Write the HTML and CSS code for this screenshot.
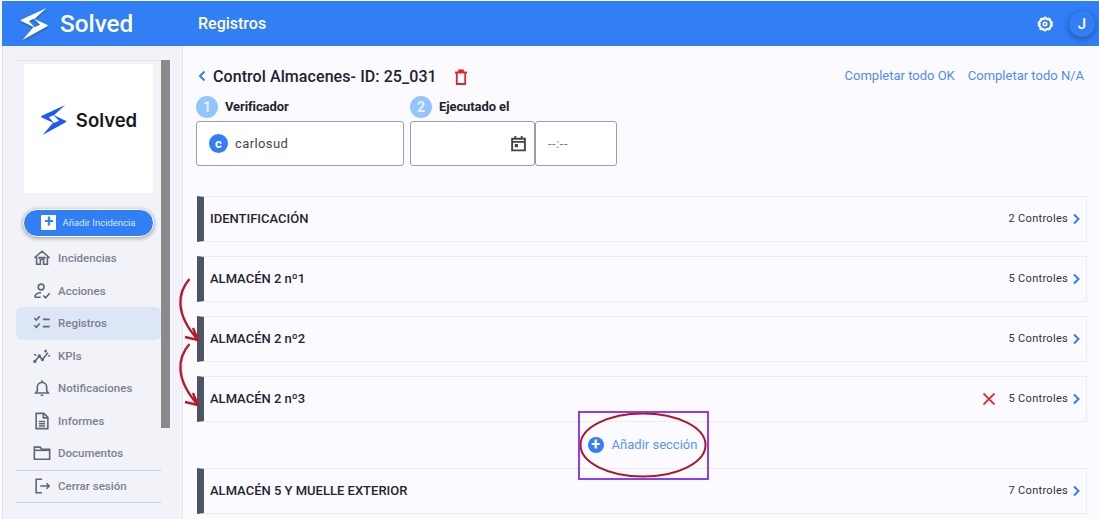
FILE: index.html
```html
<!DOCTYPE html>
<html lang="es">
<head>
<meta charset="utf-8">
<title>Registros</title>
<link rel="stylesheet" href="styles.css">
</head>
<body>
<div class="app">
  <header class="topbar">
    <div class="brand">
      <svg class="brand-mark" viewBox="8 4 27 32"><path fill-rule="evenodd" fill="#fff" d="M34 4 9 15.500c-1 .6-1 1.200 0 1.700L21 23 10 36l24.500-13.500c1-.6 1-1.200 0-1.700L22 15ZM16.500 17l5-2.200 6 6-5.500 2.500Z"/></svg>
      <span class="brand-name">Solved</span>
    </div>
    <div class="page-name">Registros</div>
    <svg class="gear" viewBox="0 0 24 24" fill="none" stroke="#fff" stroke-width="3.400" stroke-linejoin="round"><path d="M12 2.500l3 2 3.600-.2 1.400 3.200 2.400 2.500-1.400 2 1.400 2-2.400 2.500-1.400 3.200-3.600-.2-3 2-3-2-3.600.2L5 16.500 2.600 14 4 12l-1.400-2L5 7.500l1.400-3.200 3.600.2Z"/><circle cx="12" cy="12" r="2.600" stroke-width="2.400"/></svg>
    <div class="avatar">J</div>
  </header>
  <div class="body">
    <aside class="sidebar">
      <div class="side-col">
        <div class="logo-card">
          <svg class="logo-mark" viewBox="8 4 27 32"><path fill-rule="evenodd" fill="#1d5cf0" d="M34 4 9 15.500c-1 .6-1 1.200 0 1.700L21 23 10 36l24.500-13.500c1-.6 1-1.200 0-1.700L22 15ZM16.500 17l5-2.200 6 6-5.500 2.500Z"/></svg>
          <span class="logo-name">Solved</span>
        </div>
        <button class="add-btn"><span class="add-plus">+</span>Añadir Incidencia</button>
        <nav class="nav">
          <a class="nav-item"><svg class="nav-ico" viewBox="0 0 20 20"><path d="M1.500 10 10 2.500l8.500 7.500M4 8.500V17h4.200v-5.500h3.600V17H16V8.500M7 11V9.500h6V11"/></svg>Incidencias</a>
          <a class="nav-item"><svg class="nav-ico" viewBox="0 0 20 20"><circle cx="9" cy="5.500" r="3.200"/><path d="M2 17c0-3.500 3-5.200 7-5M11.500 15l2.500 2.500 4.500-5M2 17h6.500"/></svg>Acciones</a>
          <a class="nav-item active"><svg class="nav-ico" viewBox="0 0 20 20"><path d="M1.500 4.500l2.200 2.200L7.500 2.500M1.500 12.500l2.200 2.200 3.800-4.200M11 6h7.500M11 14h7.500"/></svg>Registros</a>
          <a class="nav-item"><svg class="nav-ico kpi" viewBox="0 0 20 20"><path d="M2 16l5-6 3.500 4 6-7.500"/><path d="M1.500 8l2 1.500M14 3v3M12.500 4.500h3M17 9.500l2 .5"/><circle cx="2" cy="16" r="1"/><circle cx="7" cy="10" r="1"/><circle cx="10.500" cy="14" r="1"/></svg>KPIs</a>
          <a class="nav-item"><svg class="nav-ico" viewBox="0 0 20 20"><path d="M3 15.500h14l-1.800-2.500V9a5.200 5.200 0 0 0-10.400 0v4ZM10 1.500v2M8.500 18h3"/></svg>Notificaciones</a>
          <a class="nav-item"><svg class="nav-ico" viewBox="0 0 20 20"><path d="M3.500 1.500h8.500l4.500 4.500v12.500h-13ZM11.500 1.500V6.500h5M6.500 10.500h7M6.500 13h7M6.500 15.500h7"/></svg>Informes</a>
          <a class="nav-item"><svg class="nav-ico" viewBox="0 0 20 20"><path d="M1.500 3.500h6.500l2 2.500h8.500v11h-17Z"/><path d="M1.500 7h17"/></svg>Documentos</a>
          <a class="nav-item logout"><svg class="nav-ico" viewBox="0 0 20 20"><path d="M10 2.500H3.500v15H10M8 10h10M15 7l3 3-3 3"/></svg>Cerrar sesión</a>
        </nav>
      </div>
      <div class="scroll-track"><div class="scroll-thumb"></div></div>
    </aside>
    <main class="main">
      <div class="title-row">
        <svg class="back" viewBox="0 0 10 14"><path d="M7.500 2.500 3 7l4.500 4.500"/></svg>
        <h1 class="title">Control Almacenes- ID: 25_031</h1>
        <svg class="trash" viewBox="0 0 14 16"><path d="M1 3.500h12M5 3V1.500h4V3M2.800 3.500V15h8.400V3.500"/></svg>
        <div class="links"><a>Completar todo OK</a><a>Completar todo N/A</a></div>
      </div>
      <div class="fields">
        <div class="field">
          <div class="field-label"><span class="step">1</span>Verificador</div>
          <div class="box box-user"><span class="chip">c</span>carlosud</div>
        </div>
        <div class="field">
          <div class="field-label"><span class="step">2</span>Ejecutado el</div>
          <div class="dates">
            <div class="box box-date"><svg class="cal" viewBox="0 0 16 16"><path d="M2 3.500h12V14.500H2ZM2 6.500h12M5 1v3M11 1v3"/><rect x="4.500" y="8.500" width="3" height="3" fill="#444" stroke="none"/></svg></div>
            <div class="box box-time">--:--</div>
          </div>
        </div>
      </div>
      <section class="sections">
        <div class="row"><span class="row-name">IDENTIFICACIÓN</span><span class="count">2 Controles</span><svg class="chev" viewBox="0 0 8 12"><path d="M2 1.500 6.500 6 2 10.500"/></svg></div>
        <div class="row"><span class="row-name">ALMACÉN 2 nº1</span><span class="count">5 Controles</span><svg class="chev" viewBox="0 0 8 12"><path d="M2 1.500 6.500 6 2 10.500"/></svg></div>
        <div class="row"><span class="row-name">ALMACÉN 2 nº2</span><span class="count">5 Controles</span><svg class="chev" viewBox="0 0 8 12"><path d="M2 1.500 6.500 6 2 10.500"/></svg></div>
        <div class="row"><span class="row-name">ALMACÉN 2 nº3</span><svg class="del" viewBox="0 0 12 12"><path d="M.5.5l11 11M11.500.5l-11 11"/></svg><span class="count">5 Controles</span><svg class="chev" viewBox="0 0 8 12"><path d="M2 1.500 6.500 6 2 10.500"/></svg></div>
        <div class="add-section"><span class="add-circle">+</span><span class="add-label">Añadir sección</span></div>
        <div class="row"><span class="row-name">ALMACÉN 5 Y MUELLE EXTERIOR</span><span class="count">7 Controles</span><svg class="chev" viewBox="0 0 8 12"><path d="M2 1.500 6.500 6 2 10.500"/></svg></div>
      </section>
    </main>
  </div>
  <svg class="annotations" viewBox="0 0 1099 519">
    <path class="red" d="M189.500 279C178 292 174 313 198 340M185 337l13 3-5-12M189.500 344C178 357 174 378 198 405M185 402l13 3-5-12"/>
    <ellipse class="oval" cx="643" cy="445" rx="62.500" ry="31.500"/>
    <rect class="purple" x="579" y="412" width="129" height="67"/>
  </svg>
</div>
</body>
</html>
```

FILE: styles.css
```css
* { box-sizing: border-box; }
html, body { margin: 0; padding: 0; height: 100%; overflow: hidden; }
body { font-family: Roboto, "Liberation Sans", sans-serif; background: #fbfbff; color: #1f2937; }
.app { position: relative; width: 1099px; height: 519px; overflow: hidden; }

.topbar { height: 46px; margin: 1px 0 -1px 2px; background: #317ef5; color: #fff; display: flex; align-items: center; border-bottom: 1px solid #8db6f8; }
.brand { width: 196px; display: flex; align-items: center; padding-left: 18px; }
.brand-mark { width: 28px; height: 32px; filter: drop-shadow(0 1px 1px rgba(0,0,0,.35)); }
.brand-name { font-size: 24.300px; font-weight: 500; margin-left: 12px; }
.page-name { font-size: 16px; font-weight: 500; flex: 1; }
.gear { width: 16px; height: 16px; margin-right: 16px; }
.avatar { width: 26px; height: 26px; border-radius: 50%; background: #317ef5; box-shadow: 0 2px 6px rgba(0,0,0,.35); display: flex; align-items: center; justify-content: center; font-size: 15px; font-weight: 500; margin-right: 4px; }

.body { display: flex; height: 473px; }
.sidebar { width: 181px; background: #f1f3f8; margin-left: 2px; padding: 14px 0 0 13px; border-right: 1px solid #e5e7ee; display: flex; border-left: 1px solid #dfe2ea; flex: none; }
.side-col { width: 145px; border-top: 1px solid #e3e5ec; padding-top: 3px; }
.scroll-track { width: 9px; height: 380px; background: #f2f3f4; }
.scroll-thumb { height: 368px; background: #8a8a8a; }

.logo-card { margin: 0 8px; height: 129px; width: 129px; background: #fff; display: flex; align-items: center; justify-content: center; gap: 9px; padding-bottom: 18px; }
.logo-mark { width: 27px; height: 30px; }
.logo-name { font-size: 18.500px; font-weight: 600; color: #16181d; font-family: Inter, Roboto, sans-serif; }
.add-btn { display: flex; align-items: center; justify-content: center; gap: 6px; width: 131px; height: 28px; margin: 16px 0 0 7px; border: 1.500px solid #fff; border-radius: 14px; background: #317ef5; color: #dbe8fd; font: 400 9.500px Roboto, sans-serif; box-shadow: 0 1px 4px rgba(0,0,0,.4); padding: 0 0 1px; }
.add-plus { width: 15px; height: 15px; background: #fff; color: #317ef5; border-radius: 1px; font-size: 16px; font-weight: 700; line-height: 14px; text-align: center; }
.nav { margin-top: 5px; display: flex; flex-direction: column; }
.nav-item { height: 32.500px; display: flex; align-items: center; gap: 7px; padding-left: 17px; font-size: 11.500px; font-weight: 500; color: #7b8190; border-radius: 6px; }
.nav-ico { width: 18px; height: 18px; fill: none; stroke: #5f6675; stroke-width: 1.800; flex: none; }
.kpi circle { fill: #5f6675; }
.active { background: #dce6f6; }
.logout { height: 33px; border-top: 1px solid #ccd5e2; border-bottom: 1px solid #ccd5e2; border-radius: 0; }

.main { flex: 1; padding: 17px 12px 0 14px; background: #fbfbff; }
.title-row { display: flex; align-items: center; height: 26px; }
.back { width: 10px; height: 14px; fill: none; stroke: #317ef5; stroke-width: 2; margin-right: 6px; }
.title { font-size: 16px; font-weight: 500; margin: 0; color: #1b2230; letter-spacing: .08px; }
.trash { width: 14px; height: 16px; margin: 2px 0 0 17px; fill: none; stroke: #e0262b; stroke-width: 1.800; }
.links { margin: 0 3px 2px auto; display: flex; gap: 13px; font-size: 13px; color: #4f8bf2; }

.fields { display: flex; gap: 6px; margin: 6px 0 0 -1px; }
.field-label { display: flex; align-items: center; gap: 7px; height: 23px; font-size: 13px; font-weight: 700; color: #1f2430; letter-spacing: -.1px; }
.step { width: 22px; height: 22px; border-radius: 50%; background: #93c5fd; color: #e3f0ff; display: flex; align-items: center; justify-content: center; font-size: 14px; font-weight: 700; }
.dates { display: flex; }
.box { height: 45px; margin-top: 3px; background: #fff; border: 1px solid #9a9ea6; border-radius: 3px; display: flex; align-items: center; }
.box-user { width: 208px; padding-left: 12px; gap: 7px; font-size: 13px; letter-spacing: .4px; color: #3f4654; }
.chip { width: 19px; height: 19px; border-radius: 50%; background: #317ef5; color: #fff; display: flex; align-items: center; justify-content: center; font-size: 13px; font-weight: 700; }
.box-date { width: 125px; justify-content: flex-end; padding-right: 7px; }
.cal { width: 17px; height: 17px; fill: none; stroke: #444; stroke-width: 1.800; }
.box-time { width: 82px; padding-left: 12px; font-size: 13px; letter-spacing: .5px; color: #7b7f88; }

.sections { margin-top: 30px; display: flex; flex-direction: column; gap: 14px; }
.row { height: 46px; display: flex; align-items: center; padding: 0 6px 2px; background: #fbfbff; border: 1px solid #ebecf1; border-left: 7px solid #4b5563; }
.row-name { flex: 1; font-size: 13px; font-weight: 500; color: #1f2430; }
.count { font-size: 11px; letter-spacing: .3px; color: #2b3140; }
.del { width: 12px; height: 12px; margin: 2px 14px 0 0; fill: none; stroke: #e0262b; stroke-width: 1.800; }
.chev { width: 8px; height: 12px; margin: 2px 0 0 4px; fill: none; stroke: #317ef5; stroke-width: 2; }
.add-section { height: 46px; margin: -14px 0; display: flex; align-items: center; justify-content: center; gap: 8px; font-size: 13px; color: #5a95f7; padding-left: 1px; }
.add-label { margin-bottom: 2px; }
.add-circle { width: 16px; height: 16px; border-radius: 50%; background: #317ef5; color: #fff; display: flex; align-items: center; justify-content: center; font-size: 16px; font-weight: 700; line-height: 1; }

.annotations { position: absolute; left: 0; top: 0; width: 1099px; height: 519px; pointer-events: none; fill: none; }
.red { stroke: #b8192d; stroke-width: 2.400; }
.oval { stroke: #b01726; stroke-width: 2; }
.purple { stroke: #8b3ff5; stroke-width: 2; }
```
